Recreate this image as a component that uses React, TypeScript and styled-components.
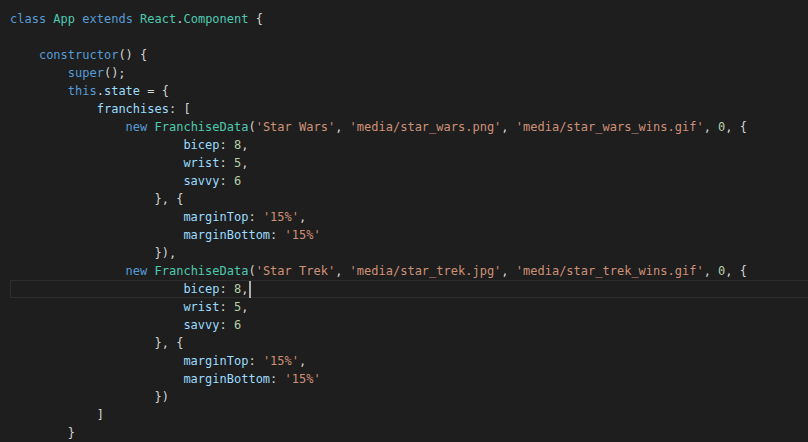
import React from "react";
import styled, { createGlobalStyle } from "styled-components";

const Global = createGlobalStyle`
  html, body { margin: 0; padding: 0; background: #1e1e1e; }
  body { width: 808px; height: 442px; overflow: hidden; }
`;

type Kind = "kw" | "cls" | "str" | "num" | "prop" | "p";

const colors: Record<Kind, string> = {
  kw: "#569cd6",
  cls: "#4ec9b0",
  str: "#ce9178",
  num: "#b5cea8",
  prop: "#9cdcfe",
  p: "#d4d4d4",
};

const Editor = styled.div`
  background: #1e1e1e;
  width: 808px;
  height: 442px;
  padding-top: 10px;
  box-sizing: border-box;
  display: flex;
  flex-direction: column;
  font-family: "DejaVu Sans Mono", "Liberation Mono", monospace;
  font-size: 12px;
  overflow: hidden;
`;

const Line = styled.div<{ $current?: boolean }>`
  height: 18px;
  line-height: 18px;
  margin-left: 10px;
  white-space: pre;
  color: #d4d4d4;
  box-sizing: border-box;
  display: flex;
  align-items: center;
  position: relative;
  border: 1px solid ${(p) => (p.$current ? "#2e2e2e" : "transparent")};
  border-right: none;
  padding-left: 0;
  & > span:first-child { margin-left: -1px; }
`;

const Tok = styled.span<{ $k: Kind }>`
  color: ${(p) => colors[p.$k]};
`;

const Cursor = styled.span`
  display: inline-block;
  width: 2px;
  height: 17px;
  background: #aeafad;
  margin-left: 1px;
`;

type T = [Kind, string];

const I = (n: number): T => ["p", " ".repeat(n)];

const franchise = (name: string, img: string, gif: string): T[][] => [
  [I(16), ["kw", "new"], ["p", " "], ["cls", "FranchiseData"], ["p", "("], ["str", `'${name}'`], ["p", ", "], ["str", `'${img}'`], ["p", ", "], ["str", `'${gif}'`], ["p", ", "], ["num", "0"], ["p", ", {"]],
  [I(24), ["prop", "bicep"], ["p", ": "], ["num", "8"], ["p", ","]],
  [I(24), ["prop", "wrist"], ["p", ": "], ["num", "5"], ["p", ","]],
  [I(24), ["prop", "savvy"], ["p", ": "], ["num", "6"]],
  [I(20), ["p", "}, {"]],
  [I(24), ["prop", "marginTop"], ["p", ": "], ["str", "'15%'"], ["p", ","]],
  [I(24), ["prop", "marginBottom"], ["p", ": "], ["str", "'15%'"]],
];

const first = franchise("Star Wars", "media/star_wars.png", "media/star_wars_wins.gif");
const second = franchise("Star Trek", "media/star_trek.jpg", "media/star_trek_wins.gif");

const lines: T[][] = [
  [["kw", "class"], ["p", " "], ["cls", "App"], ["p", " "], ["kw", "extends"], ["p", " "], ["cls", "React"], ["p", "."], ["cls", "Component"], ["p", " {"]],
  [],
  [I(4), ["kw", "constructor"], ["p", "() {"]],
  [I(8), ["kw", "super"], ["p", "();"]],
  [I(8), ["kw", "this"], ["p", "."], ["prop", "state"], ["p", " = {"]],
  [I(12), ["prop", "franchises"], ["p", ": ["]],
  ...first,
  [I(20), ["p", "}),"]],
  ...second,
  [I(20), ["p", "})"]],
  [I(12), ["p", "]"]],
  [I(8), ["p", "}"]],
];

const CURRENT = 15;

export default function App() {
  return (
    <>
      <Global />
      <Editor>
        {lines.map((toks, i) => (
          <Line key={i} $current={i === CURRENT}>
            {toks.length === 0 ? <Tok $k="p">{" "}</Tok> : null}
            {toks.map(([k, s], j) => (
              <Tok key={j} $k={k}>
                {s}
              </Tok>
            ))}
            {i === CURRENT ? <Cursor /> : null}
          </Line>
        ))}
      </Editor>
    </>
  );
}
